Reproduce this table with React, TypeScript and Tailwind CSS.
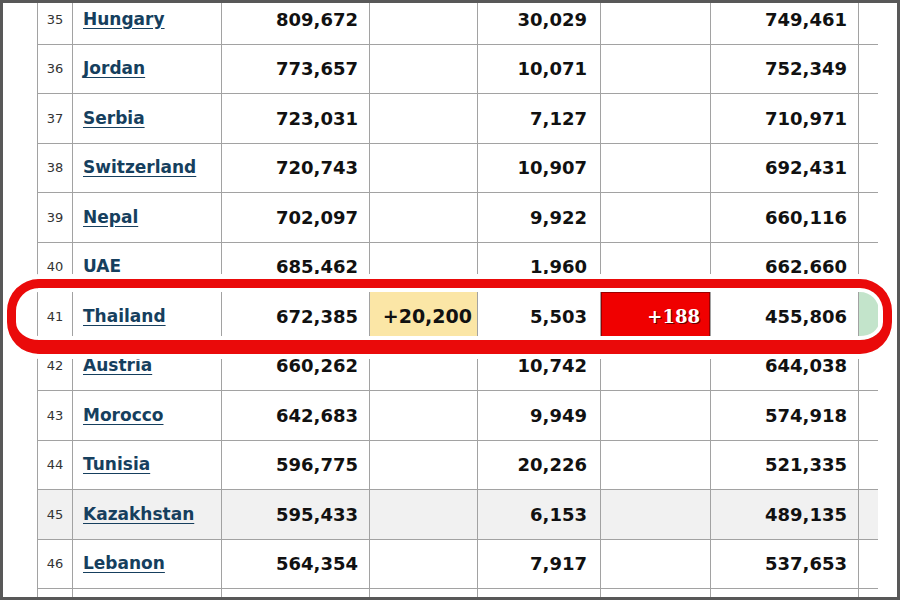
import React from 'react';

interface Row {
  n: number;
  country: string;
  cases: string;
  deaths: string;
  recovered: string;
}

const rows: Row[] = [
  { n: 35, country: 'Hungary', cases: '809,672', deaths: '30,029', recovered: '749,461' },
  { n: 36, country: 'Jordan', cases: '773,657', deaths: '10,071', recovered: '752,349' },
  { n: 37, country: 'Serbia', cases: '723,031', deaths: '7,127', recovered: '710,971' },
  { n: 38, country: 'Switzerland', cases: '720,743', deaths: '10,907', recovered: '692,431' },
  { n: 39, country: 'Nepal', cases: '702,097', deaths: '9,922', recovered: '660,116' },
  { n: 40, country: 'UAE', cases: '685,462', deaths: '1,960', recovered: '662,660' },
  { n: 41, country: 'Thailand', cases: '672,385', deaths: '5,503', recovered: '455,806' },
  { n: 42, country: 'Austria', cases: '660,262', deaths: '10,742', recovered: '644,038' },
  { n: 43, country: 'Morocco', cases: '642,683', deaths: '9,949', recovered: '574,918' },
  { n: 44, country: 'Tunisia', cases: '596,775', deaths: '20,226', recovered: '521,335' },
  { n: 45, country: 'Kazakhstan', cases: '595,433', deaths: '6,153', recovered: '489,135' },
  { n: 46, country: 'Lebanon', cases: '564,354', deaths: '7,917', recovered: '537,653' },
];

const cell = 'border border-[#a2a2a2] p-0';
const num = `${cell} text-right font-bold text-[18px] text-[#111]`;

export default function App() {
  return (
    <div className="relative w-[900px] h-[600px] overflow-hidden bg-white border-[3px] border-[#585858] font-['DejaVu_Sans',sans-serif]">
      <table className="ml-[34px] -mt-[9px] border-collapse table-fixed w-[840px]">
        <colgroup>
          <col className="w-[35px]" />
          <col className="w-[149px]" />
          <col className="w-[148px]" />
          <col className="w-[108px]" />
          <col className="w-[123px]" />
          <col className="w-[110px]" />
          <col className="w-[148px]" />
          <col className="w-[19px]" />
        </colgroup>
        <tbody>
          {rows.map((r) => {
            const hot = r.n === 41;
            const grey = r.n === 45;
            return (
              <tr key={r.n} className={`h-[49.5px] ${grey ? 'bg-[#f1f1f1]' : 'bg-white'}`}>
                <td className={`${cell} text-center text-[13px] text-[#333]`}>{r.n}</td>
                <td className={`${cell} pl-[10px]`}>
                  <a className="font-bold text-[17px] text-[#163f5e] underline underline-offset-[3px]">{r.country}</a>
                </td>
                <td className={`${num} pr-[11px]`}>{r.cases}</td>
                <td className={`${num} pr-[5px] ${hot ? 'bg-[#fbe6a6] text-[19px]' : ''}`}>{hot ? '+20,200' : ''}</td>
                <td className={`${num} pr-[13px]`}>{r.deaths}</td>
                <td
                  className={`${cell} text-right pr-[10px] ${
                    hot ? 'bg-[#f00000] shadow-[inset_0_0_0_1px_#9a0000]' : ''
                  }`}
                >
                  {hot && (
                    <span className="font-['DejaVu_Serif',serif] font-bold text-[18px] text-white [text-shadow:1px_1px_0_#600]">
                      +188
                    </span>
                  )}
                </td>
                <td className={`${num} pr-[11px]`}>{r.recovered}</td>
                <td className={`${cell} border-r-0 ${hot ? 'bg-[#c3e4cb]' : ''}`}></td>
              </tr>
            );
          })}
          {/* next row, only its top edge shows above the frame */}
          <tr className="h-[49.5px] bg-white">
            <td className={cell}></td>
            <td className={cell}></td>
            <td className={cell}></td>
            <td className={cell}></td>
            <td className={cell}></td>
            <td className={cell}></td>
            <td className={cell}></td>
            <td className={`${cell} border-r-0`}></td>
          </tr>
        </tbody>
      </table>

      {/* red marker ring drawn over the Thailand row */}
      <div className="absolute left-[4px] top-[276px] w-[885px] h-[75px] rounded-[32px] border-[9px] border-b-[14px] border-[#ea0a0a] shadow-[0_0_0_5px_#fff,inset_0_0_0_4px_#fff]"></div>
    </div>
  );
}
